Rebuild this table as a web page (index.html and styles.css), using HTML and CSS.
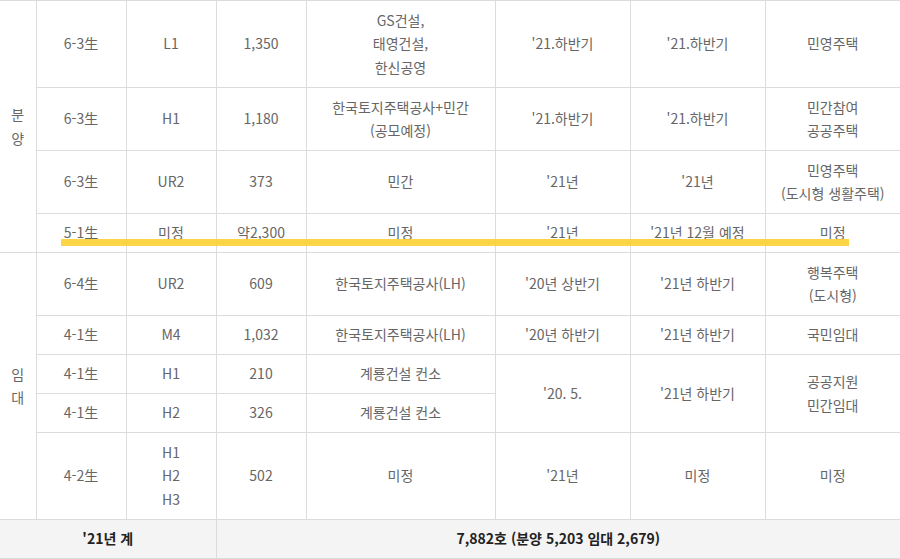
FILE: index.html
```html
<!DOCTYPE html>
<html lang="ko">
<head>
<meta charset="utf-8">
<link rel="stylesheet" href="styles.css">
</head>
<body>
<div class="wrap">
<table class="supply">
  <colgroup>
    <col class="c-cat"><col class="c-n"><col class="c-n"><col class="c-n"><col class="c-wide"><col class="c-m"><col class="c-m"><col class="c-m">
  </colgroup>
  <tbody>
    <tr class="h87">
      <td rowspan="4" class="cat">분<br>양</td>
      <td>6-3生</td><td>L1</td><td>1,350</td>
      <td>GS건설,<br>태영건설,<br>한신공영</td>
      <td>'21.하반기</td><td>'21.하반기</td><td>민영주택</td>
    </tr>
    <tr class="h63">
      <td>6-3生</td><td>H1</td><td>1,180</td>
      <td>한국토지주택공사+민간<br>(공모예정)</td>
      <td>'21.하반기</td><td>'21.하반기</td><td>민간참여<br>공공주택</td>
    </tr>
    <tr class="h63">
      <td>6-3生</td><td>UR2</td><td>373</td>
      <td>민간</td>
      <td>'21년</td><td>'21년</td><td>민영주택<br>(도시형 생활주택)</td>
    </tr>
    <tr class="h39">
      <td>5-1生</td><td>미정</td><td>약2,300</td>
      <td>미정</td>
      <td>'21년</td><td>'21년 12월 예정</td><td>미정</td>
    </tr>
    <tr class="h63">
      <td rowspan="5" class="cat">임<br>대</td>
      <td>6-4生</td><td>UR2</td><td>609</td>
      <td>한국토지주택공사(LH)</td>
      <td>'20년 상반기</td><td>'21년 하반기</td><td>행복주택<br>(도시형)</td>
    </tr>
    <tr class="h39">
      <td>4-1生</td><td>M4</td><td>1,032</td>
      <td>한국토지주택공사(LH)</td>
      <td>'20년 하반기</td><td>'21년 하반기</td><td>국민임대</td>
    </tr>
    <tr class="h39">
      <td>4-1生</td><td>H1</td><td>210</td>
      <td>계룡건설 컨소</td>
      <td rowspan="2">'20. 5.</td><td rowspan="2">'21년 하반기</td><td rowspan="2">공공지원<br>민간임대</td>
    </tr>
    <tr class="h39">
      <td>4-1生</td><td>H2</td><td>326</td>
      <td>계룡건설 컨소</td>
    </tr>
    <tr class="h87">
      <td>4-2生</td><td>H1<br>H2<br>H3</td><td>502</td>
      <td>미정</td>
      <td>'21년</td><td>미정</td><td>미정</td>
    </tr>
    <tr class="h39 total">
      <td colspan="3">'21년 계</td>
      <td colspan="5">7,882호 (분양 5,203 임대 2,679)</td>
    </tr>
  </tbody>
</table>
<div class="highlight"></div>
</div>
</body>
</html>
```

FILE: styles.css
```css
html, body {
  margin: 0;
  padding: 0;
  background: #fff;
}

.wrap {
  position: relative;
  width: 900px;
}

.supply {
  width: 900px;
  border-collapse: collapse;
  table-layout: fixed;
  font-family: "Noto Sans CJK KR", "Noto Sans", sans-serif;
  font-size: 14px;
  line-height: 23.5px;
  color: #666;
}

.c-cat { width: 36px; }
.c-n { width: 90px; }
.c-wide { width: 189px; }
.c-m { width: 135px; }

.supply td {
  border: 1px solid #dcdcdc;
  padding: 0 2px;
  text-align: center;
  vertical-align: middle;
}

.supply tr > td:first-child { border-left: none; }
.supply tr > td:last-child { border-right: none; }

.supply .cat {
  padding: 0;
  border-left: none;
}

.h87 { height: 87px; }
.h63 { height: 63px; }
.h39 { height: 39px; }

.total td {
  background: #f4f4f4;
  color: #222;
  font-weight: bold;
}

.highlight {
  position: absolute;
  left: 61px;
  top: 239px;
  width: 788px;
  height: 7px;
  background: rgba(253, 208, 50, 0.9);
}
```
